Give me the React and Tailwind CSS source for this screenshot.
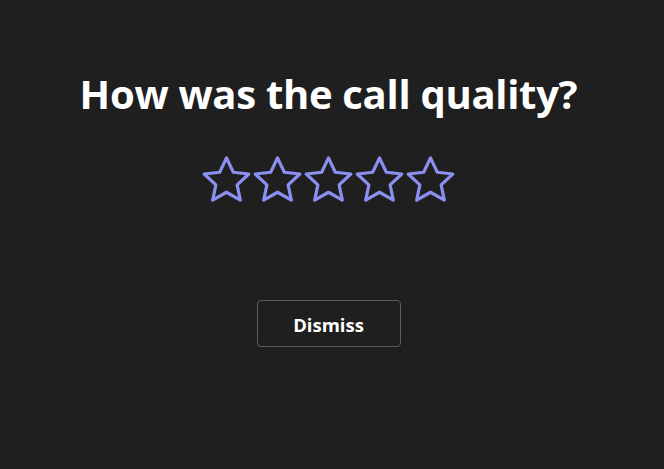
import React, { useState } from "react";

const StarIcon = () => (
  <svg viewBox="0 0 24 24" className="w-[51px] h-[51px]" fill="none">
    <polygon
      points="12,1.8 15.2,8.6 22.5,9.4 17,14.5 18.5,21.7 12,18 5.5,21.7 7,14.5 1.5,9.4 8.8,8.6"
      stroke="#8b8ff0"
      strokeWidth="1.5"
      strokeLinejoin="round"
    />
  </svg>
);

const App = () => {
  const [rating, setRating] = useState(0);

  return (
    <div
      className="min-h-screen bg-[#1f1f1f] flex flex-col items-center pt-[66px] pr-[7px]"
      style={{ fontFamily: "'Open Sans', 'Noto Sans', sans-serif" }}
    >
      <h1 className="text-white text-[40px] font-bold leading-[56px] tracking-[-0.3px]">
        How was the call quality?
      </h1>

      <div className="flex mt-[32px]">
        {[1, 2, 3, 4, 5].map((n) => (
          <button key={n} onClick={() => setRating(n)} className="p-0">
            <StarIcon />
          </button>
        ))}
      </div>

      <button className="mt-[95px] w-[144px] h-[47px] rounded-[4px] border border-[#5c5c5c] text-white text-[18.5px] font-bold leading-[24px] pt-[2px]">
        Dismiss
      </button>
    </div>
  );
};

export default App;
